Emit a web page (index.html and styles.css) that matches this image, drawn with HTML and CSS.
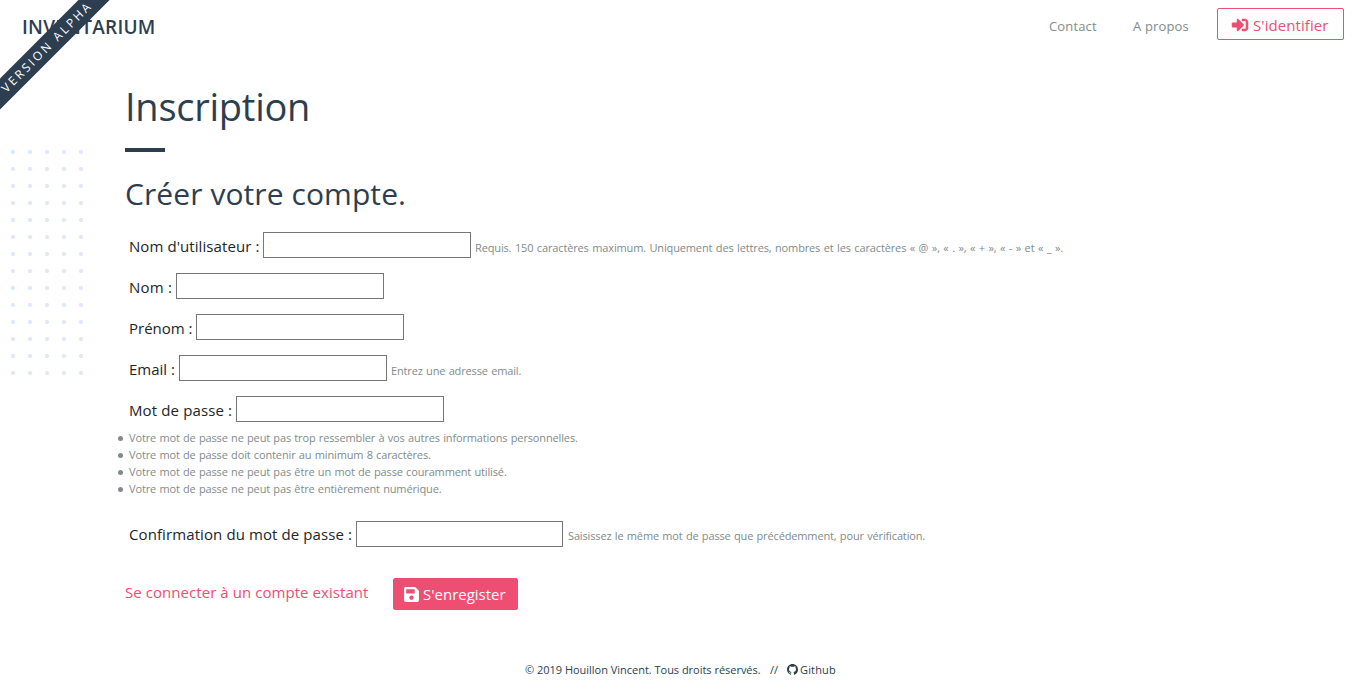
FILE: index.html
```html
<!DOCTYPE html>
<html lang="fr">
<head>
<meta charset="utf-8">
<title>Inventarium</title>
<link rel="stylesheet" href="styles.css">
</head>
<body>
<header class="navbar">
  <a class="brand">INVENTARIUM</a>
  <nav class="links">
    <a class="link contact">Contact</a>
    <a class="link about">A propos</a>
    <a class="btn outline"><svg class="icon login" viewBox="0 0 512 512"><path d="M416 448h-84c-6.600 0-12-5.400-12-12v-40c0-6.600 5.400-12 12-12h84c17.700 0 32-14.300 32-32V160c0-17.700-14.300-32-32-32h-84c-6.600 0-12-5.400-12-12V76c0-6.600 5.400-12 12-12h84c53 0 96 43 96 96v192c0 53-43 96-96 96zm-47-209L201 71c-15-15-41-4.500-41 17v96H24c-13.300 0-24 10.700-24 24v96c0 13.300 10.700 24 24 24h136v96c0 21.500 26 32 41 17l168-168c9.300-9.400 9.300-24.600 0-34z"/></svg><span class="t-login">S'identifier</span></a>
  </nav>
</header>
<div class="ribbon"><span class="t-ribbon">VERSION ALPHA</span></div>
<div class="dots"></div>
<main class="content">
  <h1 class="title"><span class="t-title">Inscription</span></h1>
  <div class="rule"></div>
  <h2 class="subtitle"><span class="t-sub">Créer votre compte.</span></h2>
  <form class="form">
    <div class="row"><label class="w-user">Nom d'utilisateur :</label><input class="field"><small class="help h-user">Requis. 150 caractères maximum. Uniquement des lettres, nombres et les caractères « @ », « . », « + », « - » et « _ ».</small></div>
    <div class="row"><label class="w-name">Nom :</label><input class="field"></div>
    <div class="row"><label class="w-first">Prénom :</label><input class="field"></div>
    <div class="row"><label class="w-email">Email :</label><input class="field"><small class="help h-email">Entrez une adresse email.</small></div>
    <div class="row"><label class="w-pass">Mot de passe :</label><input class="field" type="password"></div>
    <ul class="rules">
      <li><span class="r1">Votre mot de passe ne peut pas trop ressembler à vos autres informations personnelles.</span></li>
      <li><span class="r2">Votre mot de passe doit contenir au minimum 8 caractères.</span></li>
      <li><span class="r3">Votre mot de passe ne peut pas être un mot de passe couramment utilisé.</span></li>
      <li><span class="r4">Votre mot de passe ne peut pas être entièrement numérique.</span></li>
    </ul>
    <div class="row confirm"><label class="w-confirm">Confirmation du mot de passe :</label><input class="field short" type="password"><small class="help h-confirm">Saisissez le même mot de passe que précédemment, pour vérification.</small></div>
    <div class="actions">
      <a class="signin">Se connecter à un compte existant</a>
      <button class="btn solid" type="button"><svg class="icon save" viewBox="0 0 448 512"><path d="M433.900 129.900l-83.900-83.900A48 48 0 0 0 316.100 32H48C21.500 32 0 53.500 0 80v352c0 26.500 21.500 48 48 48h352c26.500 0 48-21.500 48-48V163.900a48 48 0 0 0-14.100-34zM224 416c-35.300 0-64-28.700-64-64s28.700-64 64-64 64 28.700 64 64-28.700 64-64 64zm96-304.500V212c0 6.600-5.400 12-12 12H76c-6.600 0-12-5.400-12-12V108c0-6.600 5.400-12 12-12h228.500c3.200 0 6.200 1.300 8.500 3.500l3.500 3.500a12 12 0 0 1 3.500 8.500z"/></svg><span class="t-save">S'enregister</span></button>
    </div>
  </form>
</main>
<footer class="footer"><span class="copy">© 2019 Houillon Vincent. Tous droits réservés.</span><span class="sep">//</span><svg class="github" viewBox="0 0 16 16"><path d="M8 0C3.580 0 0 3.580 0 8c0 3.540 2.290 6.530 5.470 7.590.4.070.55-.17.55-.38 0-.19-.01-.82-.01-1.490-2.010.37-2.530-.49-2.690-.94-.09-.23-.48-.94-.82-1.130-.28-.15-.68-.52-.01-.53.63-.01 1.080.58 1.230.82.72 1.210 1.870.87 2.330.66.07-.52.28-.87.51-1.070-1.780-.2-3.640-.89-3.640-3.950 0-.87.31-1.590.82-2.150-.08-.2-.36-1.020.08-2.120 0 0 .67-.21 2.200.82.64-.18 1.320-.27 2-.27s1.360.09 2 .27c1.530-1.040 2.200-.82 2.200-.82.44 1.100.16 1.920.08 2.120.51.56.82 1.270.82 2.150 0 3.070-1.870 3.750-3.650 3.950.29.25.54.73.54 1.480 0 1.070-.01 1.930-.01 2.200 0 .21.15.46.55.38A8.010 8.010 0 0 0 16 8c0-4.420-3.580-8-8-8z"/></svg><span class="gh">Github</span></footer>
</body>
</html>
```
FILE: styles.css
```css
* { box-sizing: border-box; }
body { margin: 0; height: 694px; overflow: hidden; display: flex; flex-direction: column; background: #fff; color: #212529; font: 15px/24px "Open Sans", "Noto Sans", sans-serif; white-space: nowrap; }
h1, h2, ul { margin: 0; font-weight: 400; }
.navbar { height: 52px; flex: none; display: flex; justify-content: space-between; align-items: flex-start; padding: 8px 16px 0 22px; }
.brand { font-size: 19px; line-height: 38px; font-weight: 600; letter-spacing: 0.25px; color: #2c3e50; }
.links { display: flex; }
.link { font-size: 13px; line-height: 36px; letter-spacing: 0.15px; color: #7f8c8d; }
.contact { width: 84px; }
.about { width: 84px; }
.btn { display: flex; align-items: center; height: 32px; border: 1px solid #ef4e73; border-radius: 2px; font: inherit; line-height: 30px; }
.outline { width: 127px; padding: 2px 0 0 14px; color: #ef4e73; gap: 5px; letter-spacing: 0.08px; }
.solid { width: 125px; padding: 0 0 0 10px; color: #fff; background: #ef4e73; gap: 4px; }
.icon { width: 16px; height: 16px; fill: currentColor; flex: none; }
.login { stroke: currentColor; stroke-width: 16px; overflow: visible; }
.save { width: 15px; height: 17px; }
.ribbon { position: absolute; left: -53px; top: 36px; width: 200px; height: 22px; transform: rotate(-45deg); background: #2c3e50; color: #fff; font-size: 12px; line-height: 22px; text-align: center; letter-spacing: 2.500px; }
.dots { position: absolute; left: 5px; top: 144px; width: 85px; height: 238px; background: radial-gradient(circle at 8px 8px, #dfe9fb 1.700px, transparent 2.500px) 0 0 / 17px 17px; }
.content { flex: 1; padding: 26px 0 0 125px; }
.title { font-size: 38px; line-height: 56px; letter-spacing: -0.25px; color: #2c3e50; }
.rule { width: 40px; height: 4px; margin-top: 14px; background: #2c3e50; }
.subtitle { margin-top: 20px; font-size: 30px; line-height: 44px; letter-spacing: 0.08px; color: #2c3e50; }
.form { padding-top: 16px; }
.row { display: flex; height: 26px; margin: 0 0 15px 4px; align-items: center; }
.row label { line-height: 28px; padding-top: 2px; flex: none; letter-spacing: 0.08px; }
.field { width: 208px; height: 26px; padding: 1px 4px; border: 1px solid #767676; flex: none; }
.short { width: 207px; }
.help { margin-left: 4px; padding-top: 6px; font-size: 11px; line-height: 20px; color: #7f8c8d; }
.row .w-user { width: 134px; }
.row .w-name { width: 47px; letter-spacing: 0.2px; }
.row .w-first { width: 67px; letter-spacing: 0; }
.row .w-email { width: 50px; letter-spacing: 0; }
.row .w-pass { width: 107px; letter-spacing: 0.13px; }
.row .w-confirm { width: 227px; letter-spacing: 0.1px; padding-top: 0; }
.confirm .help { margin-left: 5px; padding-top: 4px; }
.help, .rules { letter-spacing: -0.14px; word-spacing: 0.6px; }
.h-user { word-spacing: 0.8px; }
.rules { margin: -8px 0 24px; padding: 0 0 0 4px; list-style: none; font-size: 11px; line-height: 17px; color: #7f8c8d; }
.rules li { position: relative; }
.rules li::before { content: ""; position: absolute; left: -11px; top: 7px; width: 5px; height: 5px; border-radius: 50%; background: #7f8c8d; }
.actions { display: flex; align-items: flex-start; padding-top: 16px; }
.signin { width: 268px; line-height: 28px; letter-spacing: 0.06px; color: #ef4e73; }
.footer { flex: none; height: 38px; display: flex; align-items: flex-start; padding: 4px 0 0 525px; font-size: 11px; line-height: 20px; color: #2c3e50; }
.copy { width: 245px; letter-spacing: -0.02px; }
.sep { width: 17px; }
.gh { letter-spacing: 0.15px; }
.github { width: 11px; height: 11px; margin: 4px 2px 0 0; fill: #2c3e50; }
```
